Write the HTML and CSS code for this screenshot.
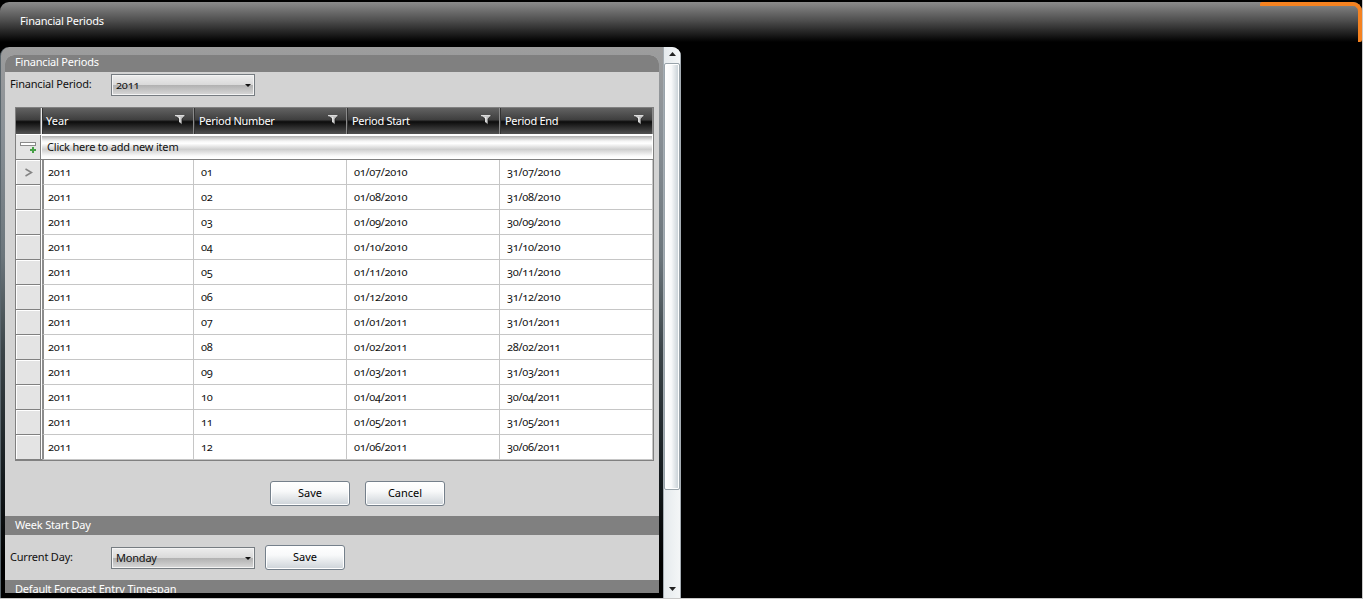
FILE: index.html
```html
<!DOCTYPE html>
<html lang="en">
<head>
<meta charset="utf-8">
<title>Financial Periods</title>
<link rel="stylesheet" href="styles.css">
</head>
<body>
<div class="app">
  <header class="topbar"><span>Financial Periods</span><div class="accent"></div></header>
  <main class="panel">
    <div class="content">
      <h2 class="section first"><span>Financial Periods</span></h2>
      <div class="form-row">
        <label class="label">Financial Period:</label>
        <div class="select nums"><span>2011</span><i class="caret"></i></div>
      </div>
      <div class="grid" id="grid">
        <div class="grid-head">
          <div class="corner"></div>
        </div>
        <div class="add-row">
          <div class="add-icon"><svg width="18" height="13" viewBox="0 0 18 13"><rect x=".5" y="1.5" width="15" height="3" fill="#fff" stroke="#8a8a8a"/><path d="M13 6v6M10 9h6" stroke="#46a046" stroke-width="2"/></svg></div>
          <div class="add-text"><span>Click here to add new item</span></div>
        </div>
      </div>
      <div class="actions"><button class="btn">Save</button><button class="btn">Cancel</button></div>
      <h2 class="section"><span>Week Start Day</span></h2>
      <div class="form-row day">
        <label class="label">Current Day:</label>
        <div class="select"><span>Monday</span><i class="caret"></i></div>
        <button class="btn">Save</button>
      </div>
      <h2 class="section"><span>Default Forecast Entry Timespan</span></h2>
    </div>
    <div class="scrollbar">
      <div class="arrow"><svg width="7" height="4"><path d="M0 4L3.5 0L7 4z" fill="#222"/></svg></div>
      <div class="thumb"></div>
      <div class="arrow down"><svg width="7" height="4"><path d="M0 0h7L3.5 4z" fill="#222"/></svg></div>
    </div>
  </main>
</div>
<script src="grid.js"></script>
</body>
</html>
```
FILE: styles.css
```css
* { box-sizing: border-box; }
body { margin: 0; background: #000; font: 11px/16px "Noto Sans", "Open Sans", sans-serif; letter-spacing: -0.2px; color: #111; }
.app { height: 599px; overflow: hidden; padding-top: 2px; border-right: 1px solid #c8c8c8; border-bottom: 1px solid #c8c8c8; }
.topbar { position: relative; height: 40px; margin-bottom: 5px; padding: 11px 20px; color: #fff; border-radius: 9px 9px 0 0; background: linear-gradient(#8b8b8b, #505050 45%, #000); }
.accent { position: absolute; right: 0; top: 0; width: 102px; height: 40px; border-top: 4px solid #f58220; border-right: 4px solid #f58220; border-radius: 2px 9px 2px 0; }
.panel { display: flex; width: 681px; height: 551px; padding: 8px 0 5px 4px; border-left: 1px solid #59656c; border-radius: 9px 9px 0 0; background: linear-gradient(#9d9d9d, #899096 15%, #6b757b 38%, #3c4549 55%, #151b1e 78%, #000 94%); overflow: hidden; }
.content { width: 654px; height: 538px; overflow: hidden; background: #d3d3d3; border-radius: 9px 9px 0 0; }
.section { height: 19px; margin: 0; padding: 1px 10px; background: #808080; color: #fff; font: inherit; }
.section.first { height: 17px; padding-top: 0; line-height: 14px; }
.form-row { display: flex; align-items: flex-start; height: 35px; padding: 2px 5px 0; }
.label { width: 101px; padding-top: 2px; }
.form-row.day { height: 45px; padding-top: 10px; }
.day .label { padding-top: 4px; }
.select { width: 144px; height: 22px; padding: 2px 3px 0 4px; display: flex; justify-content: space-between; border: 1px solid #767c81; box-shadow: inset 0 0 0 1px #f4f4f4; background: linear-gradient(#ededed, #dadada 48%, #b2b2b2 52%, #d8d8d8); }
.day .select { margin-top: 2px; }
.caret { width: 0; height: 0; margin: 7px 0 0; border: 3px solid transparent; border-top: 3px solid #111; border-bottom: 0; }
.nums { font-variant-numeric: oldstyle-nums; }
.grid { width: 639px; height: 354px; margin-left: 10px; border: 1px solid #808080; border-bottom-width: 2px; background: #fff; }
.grid-head { display: flex; height: 26px; background: linear-gradient(#626262, #3f3f3f 45%, #0c0c0c 53%, #525252); color: #fff; }
.corner { width: 26px; border-right: 1px solid #e8e8e8; box-shadow: inset -1px 0 #808080; }
.col-head { display: flex; justify-content: space-between; width: 153px; padding: 5px 7px 0 4px; border-right: 1px solid #8b8b8b; border-left: 1px solid #333; letter-spacing: -0.3px; }
.col-head:nth-child(2) { width: 152px; padding-left: 3px; letter-spacing: 0; }
.col-head svg { margin-top: 1px; }
.add-row { display: flex; height: 26px; border-top: 1px solid #fff; border-bottom: 1px solid #808080; }
.add-icon { width: 25px; padding: 6px 0 0 4px; background: #e4e4e4; border-right: 1px solid #808080; }
.add-text { flex: 1; padding: 4px 6px; box-shadow: inset 0 0 0 1px #fff; background: linear-gradient(#a0a0a0, #f5f5f5 25%, #fff 35%, #cecece 60%, #fbfbfb 88%, #fff); }
.row { display: flex; height: 25px; font-variant-numeric: oldstyle-nums; }
.row-head { width: 25px; border-right: 1px solid #808080; border-bottom: 1px solid #808080; background: #e4e4e4; box-shadow: inset 1px 1px #fff; display: flex; justify-content: center; align-items: center; }
.cell { width: 153px; padding: 4px 7px; border-right: 1px solid #c6c6c6; border-bottom: 1px solid #c6c6c6; letter-spacing: -0.3px; }
.row-head + .cell { width: 152px; margin-left: 1px; padding-left: 4px; border-left: 2px solid #8c8c8c; }
.actions { display: flex; justify-content: center; gap: 15px; height: 55px; padding: 20px 0 0 51px; }
.btn { width: 80px; height: 25px; padding: 0 0 2px; border: 1px solid #75808b; border-radius: 3px; font: inherit; color: #000; background: linear-gradient(#fff, #f8f9fa 40%, #cdd3d8); box-shadow: inset 0 0 0 1px #fff; }
.day .btn { margin-left: 10px; }
.scrollbar { flex: none; display: flex; flex-direction: column; width: 18px; height: 551px; margin: -8px 0 0 4px; border-left: 1px solid #a5adb3; border-right: 1px solid #a5adb3; background: linear-gradient(90deg, #e5eaed, #f4f6f7); }
.arrow { display: flex; justify-content: center; height: 16px; padding-top: 5px; }
.arrow.down { margin-top: auto; }
.thumb { height: 427px; border: 1px solid #99a3aa; border-radius: 2px; background: linear-gradient(90deg, #fff, #f8f9fa 45%, #c5ced4); box-shadow: inset 0 0 0 1px #fff; }
```
FILE: grid.js
```js
const grid = document.getElementById('grid');
const funnel = '<svg width="12" height="12" viewBox="0 0 12 12"><path d="M1 1.5h10L8 5v5.5L5 8.5V5z" fill="#bbb" stroke="#111" stroke-width=".6"/><path d="M1 1.7h9.5M5.8 3v5" stroke="#fff"/></svg>';
grid.querySelector('.grid-head').insertAdjacentHTML('beforeend',
  ['Year', 'Period Number', 'Period Start', 'Period End']
    .map(t => `<div class="col-head"><span>${t}</span>${funnel}</div>`).join(''));
const chevron = '<svg width="9" height="9" viewBox="0 0 9 9"><path d="M1.5 1l6 3.5-6 3.5" fill="none" stroke="#858585" stroke-width="1.5"/></svg>';
const lastDays = [31, 31, 30, 31, 30, 31, 31, 28, 31, 30, 31, 30];
lastDays.forEach((last, i) => {
  const month = String((i + 6) % 12 + 1).padStart(2, '0');
  const year = i < 6 ? 2010 : 2011;
  const number = String(i + 1).padStart(2, '0');
  const cells = ['2011', number, `01/${month}/${year}`, `${last}/${month}/${year}`];
  grid.insertAdjacentHTML('beforeend', `<div class="row"><div class="row-head">${i ? '' : chevron}</div>${cells.map(c => `<div class="cell"><span>${c}</span></div>`).join('')}</div>`);
});
```
